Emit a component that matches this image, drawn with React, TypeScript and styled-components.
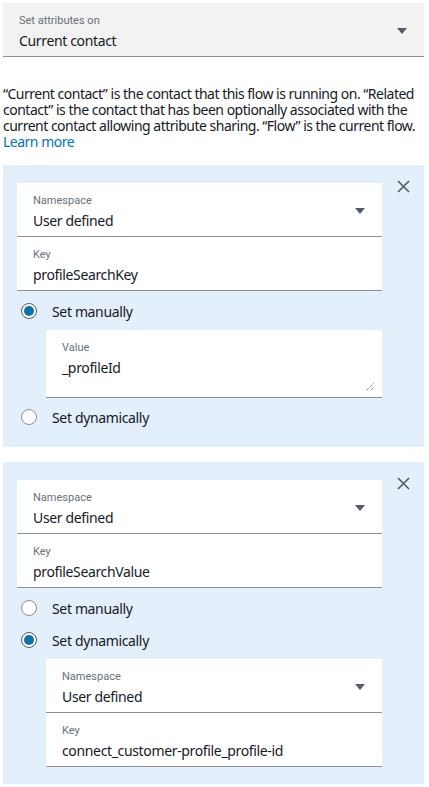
import styled, { createGlobalStyle } from 'styled-components';

const GlobalStyle = createGlobalStyle`
  html, body {
    margin: 0;
    padding: 0;
    background: #ffffff;
  }
  body {
    font-family: 'Noto Sans', 'Liberation Sans', sans-serif;
    color: #16191f;
  }
`;

interface FieldProps {
  label: string;
  value: string;
}

const SelectField = ({ label, value, $gray }: FieldProps & { $gray?: boolean }) => (
  <FieldBox $gray={$gray}>
    <FieldLabel>{label}</FieldLabel>
    <FieldValue>{value}</FieldValue>
    <Caret />
  </FieldBox>
);

const InputField = ({ label, value }: FieldProps) => (
  <FieldBox>
    <FieldLabel>{label}</FieldLabel>
    <FieldValue>{value}</FieldValue>
  </FieldBox>
);

const TextAreaField = ({ label, value }: FieldProps) => (
  <FieldBox $tall>
    <FieldLabel>{label}</FieldLabel>
    <FieldValue>{value}</FieldValue>
    <ResizeGrip width="9" height="9" viewBox="0 0 9 9">
      <path d="M1 8 L8 1 M5 8 L8 5" stroke="#687078" strokeWidth="1" strokeDasharray="1.2 0.8" fill="none" />
    </ResizeGrip>
  </FieldBox>
);

const RadioOption = ({ label, checked }: { label: string; checked?: boolean }) => (
  <RadioRow>
    <RadioDot $checked={checked} />
    <span>{label}</span>
  </RadioRow>
);

const CloseIcon = () => (
  <CloseButton aria-label="Remove">
    <svg width="13" height="13" viewBox="0 0 13 13">
      <path d="M1 1 L12 12 M12 1 L1 12" stroke="#545b64" strokeWidth="1.6" fill="none" />
    </svg>
  </CloseButton>
);

const App = () => {
  return (
    <Page>
      <GlobalStyle />
      <SelectField label="Set attributes on" value="Current contact" $gray />

      <HelpText>
        “Current contact” is the contact that this flow is running on. “Related contact” is the
        contact that has been optionally associated with the current contact allowing attribute
        sharing. “Flow” is the current flow. <LearnMore href="#">Learn more</LearnMore>
      </HelpText>

      <AttributePanel>
        <PanelFields>
          <SelectField label="Namespace" value="User defined" />
          <InputField label="Key" value="profileSearchKey" />
        </PanelFields>
        <CloseIcon />
        <RadioGroup>
          <RadioOption label="Set manually" checked />
          <Nested>
            <TextAreaField label="Value" value="_profileId" />
          </Nested>
          <RadioOption label="Set dynamically" />
        </RadioGroup>
      </AttributePanel>

      <AttributePanel>
        <PanelFields>
          <SelectField label="Namespace" value="User defined" />
          <InputField label="Key" value="profileSearchValue" />
        </PanelFields>
        <CloseIcon />
        <RadioGroup>
          <RadioOption label="Set manually" />
          <RadioOption label="Set dynamically" checked />
          <Nested>
            <SelectField label="Namespace" value="User defined" />
            <InputField label="Key" value="connect_customer-profile_profile-id" />
          </Nested>
        </RadioGroup>
      </AttributePanel>
    </Page>
  );
};

export default App;

const Page = styled.div`
  width: 421px;
  padding: 3px 5px 6px 3px;
  display: flex;
  flex-direction: column;
`;

const FieldBox = styled.div<{ $gray?: boolean; $tall?: boolean }>`
  position: relative;
  box-sizing: border-box;
  height: ${({ $tall }) => ($tall ? '68px' : '54px')};
  padding: 10px 16px 0 16px;
  background: ${({ $gray }) => ($gray ? '#f2f2f2' : '#ffffff')};
  border-bottom: 1px solid #8d9096;
`;

const FieldLabel = styled.div`
  font-family: Roboto, 'Liberation Sans', sans-serif;
  font-size: 11px;
  line-height: 16px;
  color: #687078;
`;

const FieldValue = styled.div`
  margin-top: 1px;
  font-size: 14px;
  line-height: 22px;
  letter-spacing: -0.35px;
  color: #16191f;
  white-space: nowrap;
`;

const Caret = styled.span`
  position: absolute;
  right: 17px;
  top: 25px;
  width: 0;
  height: 0;
  border-left: 5px solid transparent;
  border-right: 5px solid transparent;
  border-top: 6px solid #545b64;
`;

const ResizeGrip = styled.svg`
  position: absolute;
  right: 7px;
  bottom: 6px;
`;

const HelpText = styled.p`
  margin: 29px 0 15px 0;
  font-size: 14px;
  line-height: 16px;
  letter-spacing: -0.5px;
  color: #16191f;
`;

const LearnMore = styled.a`
  color: #0073bb;
  text-decoration: none;
`;

const AttributePanel = styled.section`
  display: grid;
  grid-template-columns: 365px 1fr;
  padding: 18px 0 17px 14px;
  margin-bottom: 15px;
  background: #e3effa;
`;

const PanelFields = styled.div`
  display: flex;
  flex-direction: column;
`;

const CloseButton = styled.button`
  justify-self: center;
  align-self: start;
  margin-top: -3px;
  padding: 0;
  border: none;
  background: none;
  width: 13px;
  height: 13px;
  cursor: pointer;
  svg {
    display: block;
  }
`;

const RadioGroup = styled.div`
  grid-column: 1 / 2;
  display: flex;
  flex-direction: column;
  gap: 6px;
  padding-top: 7px;
`;

const RadioRow = styled.label`
  display: flex;
  align-items: center;
  gap: 15px;
  height: 26px;
  padding-left: 4px;
  font-size: 14px;
  letter-spacing: -0.35px;
  color: #16191f;
`;

const RadioDot = styled.span<{ $checked?: boolean }>`
  position: relative;
  box-sizing: border-box;
  width: 16px;
  height: 16px;
  border-radius: 50%;
  border: ${({ $checked }) => ($checked ? '1.5px solid #545b64' : '1px solid #8d9096')};
  background: #ffffff;
  &::after {
    content: '';
    display: ${({ $checked }) => ($checked ? 'block' : 'none')};
    position: absolute;
    left: 1.5px;
    top: 1.5px;
    width: 10px;
    height: 10px;
    border-radius: 50%;
    background: #0b73a7;
  }
`;

const Nested = styled.div`
  display: flex;
  flex-direction: column;
  margin-left: 29px;
`;
